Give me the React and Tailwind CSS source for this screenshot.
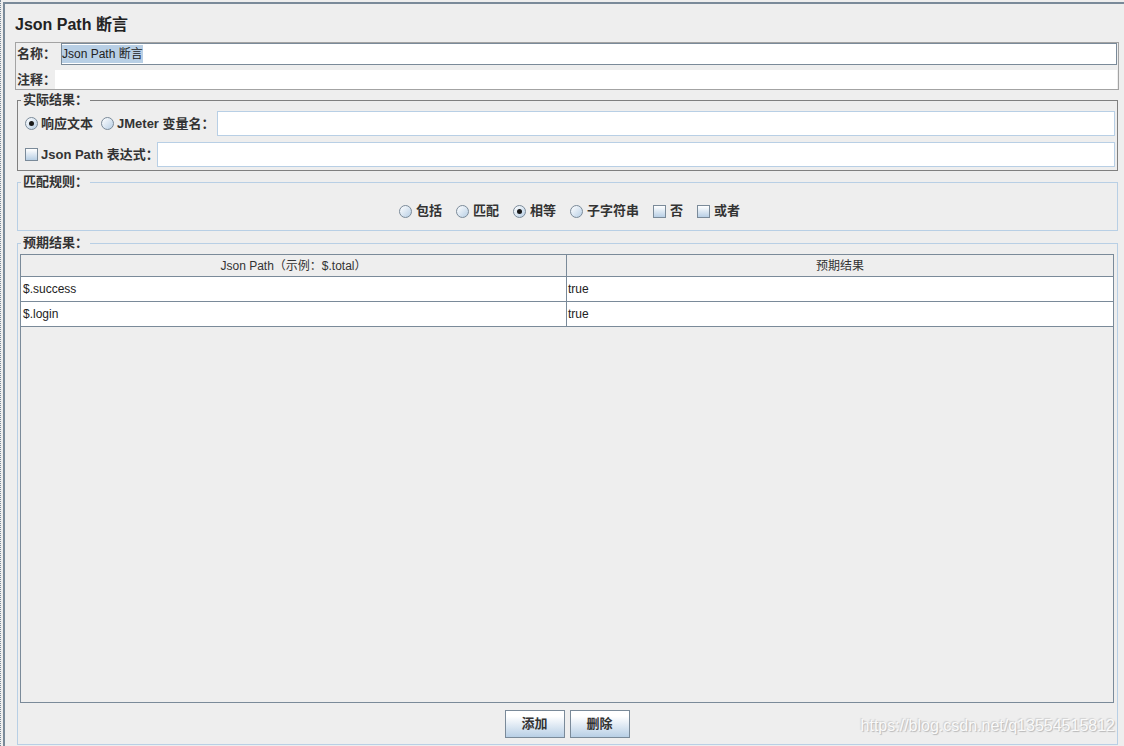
import React from 'react';

const Radio = ({ checked }) => (
  <span className="w-[13px] h-[13px] shrink-0 rounded-full border border-[#7a8a99] bg-linear-to-br from-white to-[#b8cfe5] flex items-center justify-center">
    {checked && <span className="w-[5px] h-[5px] rounded-full bg-[#1a1a1a]" />}
  </span>
);

const Check = () => (
  <span className="w-[13px] h-[13px] shrink-0 border border-[#7a8a99] bg-linear-to-b from-white to-[#b8cfe5]" />
);

const Option = ({ type = 'radio', checked, label, gap = 'gap-[4px]' }) => (
  <span className={`flex items-center ${gap}`}>
    {type === 'radio' ? <Radio checked={checked} /> : <Check />}
    <span className="text-[13px] leading-[16px] font-bold text-[#333] whitespace-nowrap">{label}</span>
  </span>
);

const Legend = ({ children }) => (
  <legend className="ml-[3px] px-[2px] text-[13px] leading-[14px] font-bold text-[#333] whitespace-nowrap">{children}</legend>
);

const rows = [
  { path: '$.success', value: 'true' },
  { path: '$.login', value: 'true' },
];

const App = () => {
  return (
    <div className="relative w-[1124px] h-[746px] bg-[#eeeeee] flex overflow-hidden font-['Liberation_Sans','Noto_Sans_CJK_SC',sans-serif] text-[#333]">
      {/* left edge */}
      <div className="w-[3px] h-full shrink-0 border-l border-dotted border-[#7a8a99]" />

      <div className="flex-1 mt-[2px] border-l-2 border-t-2 border-[#7a8a99] pl-[10px] pr-[5px] flex flex-col">
        <h1 className="pt-[11px] text-[16px] leading-[20px] font-bold text-[#222]">Json Path 断言</h1>

        {/* name / comment */}
        <div className="mt-[7px] border border-[#a3a3a3] flex flex-col">
          <div className="h-[22px] flex items-center">
            <span className="w-[45px] shrink-0 pl-[1px] text-[13px] font-bold whitespace-nowrap">名称：</span>
            <div className="flex-1 h-[22px] mr-[1px] border border-[#7a8a99] bg-white flex items-center">
              <span className="bg-[#b8cfe5] text-[12px] leading-[18px] text-[#222]">Json Path 断言</span>
            </div>
          </div>
          <div className="mt-[5px] h-[19px] flex items-center">
            <span className="w-[39px] shrink-0 pl-[1px] text-[13px] font-bold whitespace-nowrap">注释：</span>
            <div className="flex-1 h-full mr-[1px] bg-white" />
          </div>
        </div>

        {/* actual result */}
        <fieldset className="mt-[3px] ml-[2px] mr-[1px] border border-[#808080]">
          <Legend>实际结果：</Legend>
          <div className="pt-[4px] pb-[3px] pl-[7px] pr-[2px] flex flex-col gap-[6px]">
            <div className="h-[25px] flex items-center">
              <div className="w-[192px] shrink-0 flex items-center gap-[8px]">
                <Option checked label="响应文本" gap="gap-[3px]" />
                <Option label="JMeter 变量名：" gap="gap-[3px]" />
              </div>
              <div className="flex-1 h-[25px] border border-[#b8cfe5] bg-white" />
            </div>
            <div className="h-[25px] flex items-center">
              <div className="w-[132px] shrink-0 flex items-center">
                <Option type="check" label="Json Path 表达式：" gap="gap-[3px]" />
              </div>
              <div className="flex-1 h-[25px] border border-[#b8cfe5] bg-white" />
            </div>
          </div>
        </fieldset>

        {/* match rules */}
        <fieldset className="mt-[4px] ml-[2px] mr-[1px] border border-[#b8cfe5]">
          <Legend>匹配规则：</Legend>
          <div className="pt-[14px] pb-[11px] h-[41px] flex items-start justify-center gap-[14px] pl-[4px]">
            <Option label="包括" />
            <Option label="匹配" />
            <Option checked label="相等" />
            <Option label="子字符串" />
            <Option type="check" label="否" />
            <Option type="check" label="或者" />
          </div>
        </fieldset>

        {/* expected result */}
        <fieldset className="mt-[5px] ml-[2px] mr-[1px] border border-[#b8cfe5]">
          <Legend>预期结果：</Legend>
          <div className="pt-[4px] pl-[2px] pr-[3px] pb-[6px] flex flex-col">
            <div className="h-[449px] border border-[#7a8a99] bg-[#eeeeee] flex flex-col">
              <div className="h-[22px] grid grid-cols-[546px_1fr] border-b border-[#7a8a99] text-[12px] text-[#333]">
                <div className="border-r border-[#7a8a99] flex items-center justify-center">Json Path（示例：$.total）</div>
                <div className="flex items-center justify-center">预期结果</div>
              </div>
              {rows.map((r) => (
                <div key={r.path} className="h-[25px] grid grid-cols-[546px_1fr] border-b border-[#7a8a99] bg-white text-[12px] text-[#222]">
                  <div className="border-r border-[#7a8a99] flex items-center pl-[2px]">{r.path}</div>
                  <div className="flex items-center pl-[1px]">{r.value}</div>
                </div>
              ))}
            </div>
            <div className="mt-[7px] flex justify-center gap-[5px]">
              <button className="w-[60px] h-[28px] border border-[#7a8a99] bg-linear-to-b from-white from-20% to-[#b8cfe5] text-[13px] font-bold text-[#333]">添加</button>
              <button className="w-[60px] h-[28px] border border-[#7a8a99] bg-linear-to-b from-white from-20% to-[#b8cfe5] text-[13px] font-bold text-[#333]">删除</button>
            </div>
          </div>
        </fieldset>
      </div>

      <span className="absolute right-[9px] top-[717px] text-[16px] leading-[18px] text-[#fafafa] font-['Liberation_Sans',sans-serif] [text-shadow:1px_1px_1px_#b8b8b8,-1px_-1px_1px_#d0d0d0]">
        https://blog.csdn.net/q13554515812
      </span>
    </div>
  );
};

export default App;
